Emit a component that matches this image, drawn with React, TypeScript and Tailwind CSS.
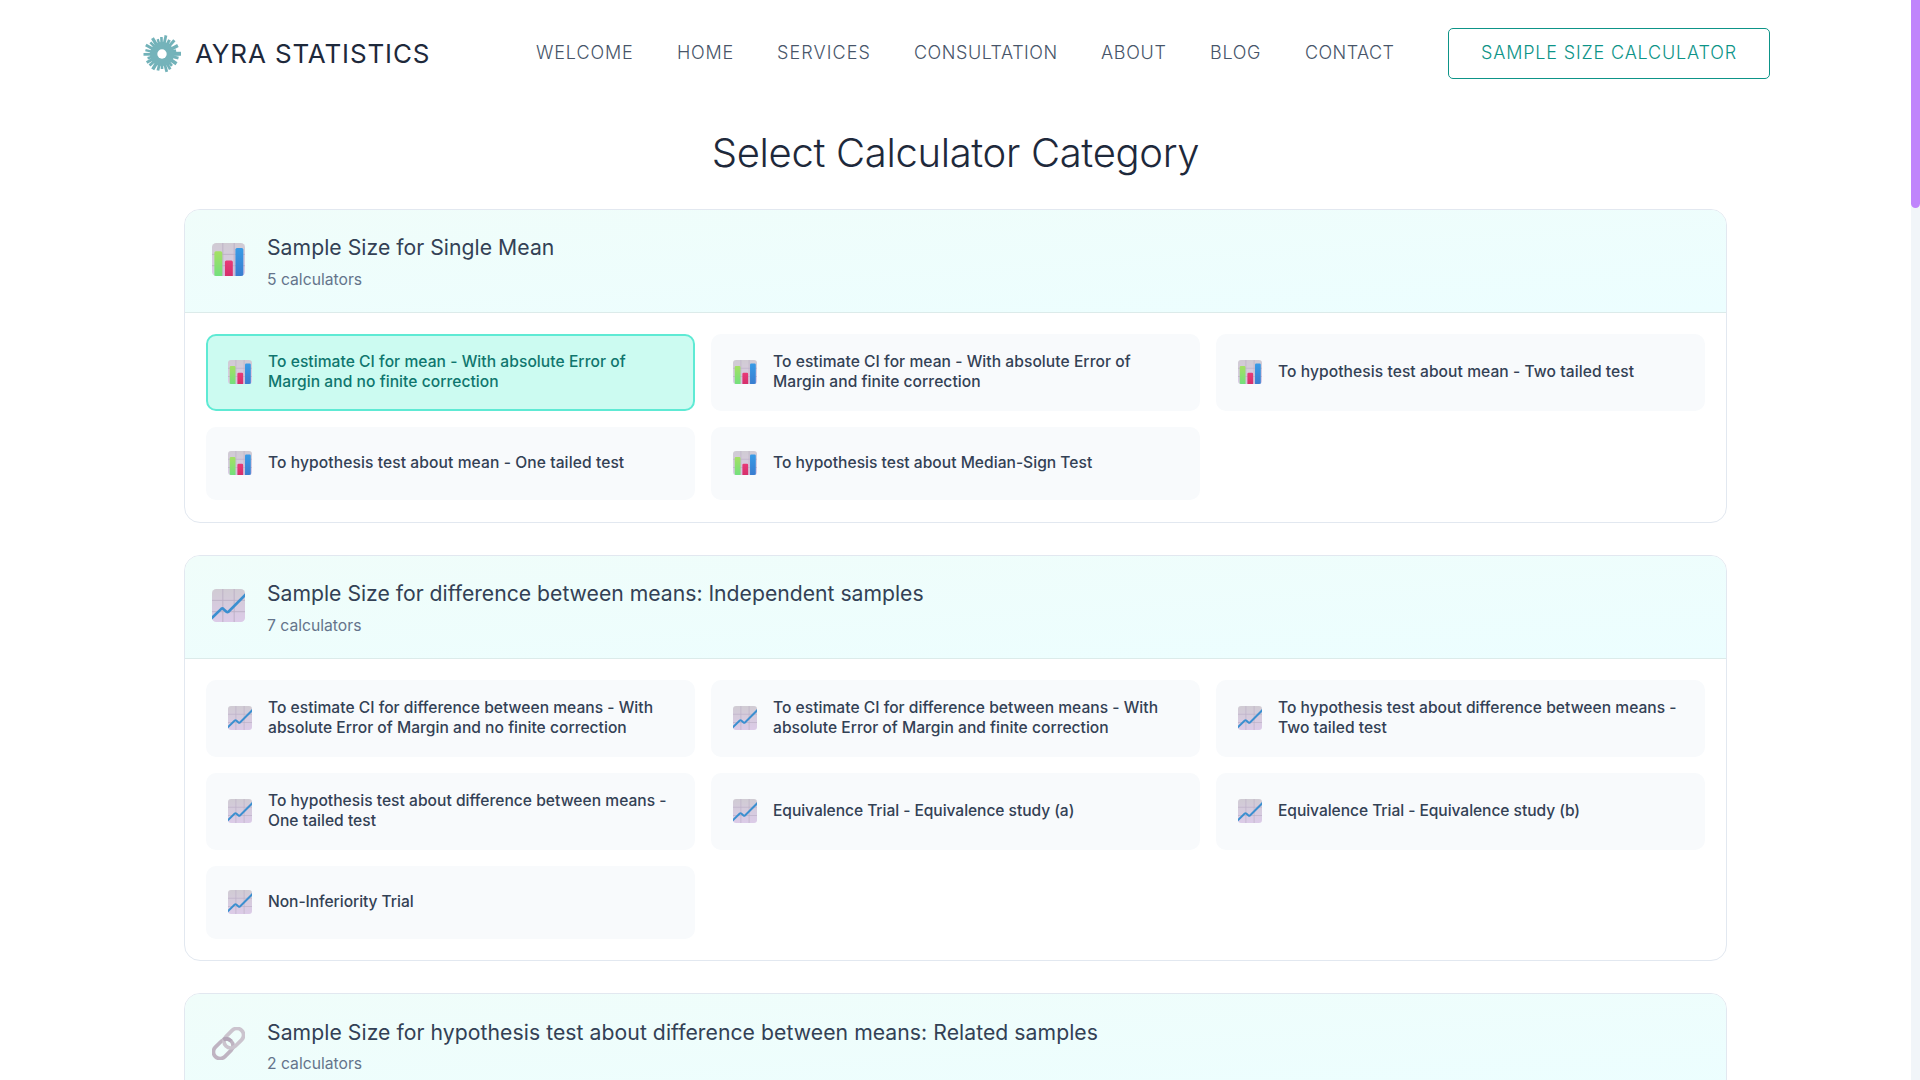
import React from "react";

type IconKind = "bars" | "line" | "link";
type Item = { lines: string[]; active?: boolean; tracking?: string };
type Category = { title: string; count: string; icon: IconKind; grid: string; heading: string; items: Item[] };

const categories: Category[] = [
  {
    title: "Sample Size for Single Mean",
    count: "5 calculators",
    icon: "bars",
    grid: "grid-rows-[77px_73px] pb-[22px]",
    heading: "leading-[31px] tracking-[0.03px]",
    items: [
      { lines: ["To estimate CI for mean - With absolute Error of", "Margin and no finite correction"], active: true },
      { lines: ["To estimate CI for mean - With absolute Error of", "Margin and finite correction"] },
      { lines: ["To hypothesis test about mean - Two tailed test"], tracking: "tracking-[0.07px]" },
      { lines: ["To hypothesis test about mean - One tailed test"], tracking: "tracking-[0.09px]" },
      { lines: ["To hypothesis test about Median-Sign Test"], tracking: "tracking-[0.01px]" },
    ],
  },
  {
    title: "Sample Size for difference between means: Independent samples",
    count: "7 calculators",
    icon: "line",
    grid: "grid-rows-[77px_77px_73px] pb-[21px]",
    heading: "leading-[31px] tracking-[-0.01px]",
    items: [
      { lines: ["To estimate CI for difference between means - With", "absolute Error of Margin and no finite correction"], tracking: "tracking-[0.02px]" },
      { lines: ["To estimate CI for difference between means - With", "absolute Error of Margin and finite correction"], tracking: "tracking-[0.02px]" },
      { lines: ["To hypothesis test about difference between means -", "Two tailed test"], tracking: "tracking-[0.02px]" },
      { lines: ["To hypothesis test about difference between means -", "One tailed test"], tracking: "tracking-[0.02px]" },
      { lines: ["Equivalence Trial - Equivalence study (a)"], tracking: "tracking-[-0.06px]" },
      { lines: ["Equivalence Trial - Equivalence study (b)"], tracking: "tracking-[-0.06px]" },
      { lines: ["Non-Inferiority Trial"], tracking: "tracking-[-0.06px]" },
    ],
  },
  {
    title: "Sample Size for hypothesis test about difference between means: Related samples",
    count: "2 calculators",
    icon: "link",
    grid: "grid-rows-[77px]",
    heading: "leading-[32px] tracking-[0.05px]",
    items: [],
  },
];

function Icon({ kind, className }: { kind: IconKind; className: string }) {
  if (kind === "link")
    return (
      <svg viewBox="0 0 32 32" className={className} fill="none">
        <g transform="rotate(-45 16 16)">
          <rect x="-2" y="9.500" width="21.500" height="13" rx="6.500" stroke="#bfb4c2" strokeWidth="3.600" />
          <rect x="12.500" y="9.500" width="21.500" height="13" rx="6.500" stroke="#cbc4ce" strokeWidth="3.600" />
          <path d="M15 9.700a6.500 6.500 0 0 1 4.500 6.300" stroke="#b3a6b8" strokeWidth="3.600" />
        </g>
      </svg>
    );
  return (
    <svg viewBox="0 0 32 32" className={className}>
      <defs>
        <linearGradient id="tile" x1="0" y1="0" x2="0" y2="1">
          <stop offset="0" stopColor="#d0cbd3" />
          <stop offset="1" stopColor="#dccbe8" />
        </linearGradient>
        <linearGradient id="green" x1="0" y1="0" x2="0" y2="1">
          <stop offset="0" stopColor="#a5e063" />
          <stop offset="1" stopColor="#73e07d" />
        </linearGradient>
        <linearGradient id="blue" x1="0" y1="0" x2="0" y2="1">
          <stop offset="0" stopColor="#389be6" />
          <stop offset="1" stopColor="#3a7dd0" />
        </linearGradient>
        <linearGradient id="red" x1="0" y1="0" x2="0" y2="1">
          <stop offset="0" stopColor="#e83a78" />
          <stop offset="1" stopColor="#d52f6b" />
        </linearGradient>
        <clipPath id="round">
          <rect width="32" height="32" rx="4" />
        </clipPath>
      </defs>
      <g clipPath="url(#round)">
        <rect width="32" height="32" fill="url(#tile)" />
        <path d="M10.500 0V32M21.500 0V32M0 11H32M0 22H32" stroke="#bcb0c6" strokeWidth="0.9" />
        {kind === "bars" ? (
          <>
            <path d="M2.300 32V9.500a1.500 1.500 0 0 1 1.500-1.500h4.700a1.500 1.500 0 0 1 1.500 1.500V32Z" fill="url(#green)" />
            <path d="M12.500 32V18.500a1.500 1.500 0 0 1 1.500-1.500h4.700a1.500 1.500 0 0 1 1.500 1.500V32Z" fill="url(#red)" />
            <path d="M22.700 32V6.300a1.500 1.500 0 0 1 1.500-1.500h4.700a1.500 1.500 0 0 1 1.500 1.500V32Z" fill="url(#blue)" />
          </>
        ) : (
          <path d="M-1 29L9 19.300Q10 18.500 11 19.300L14 22Q15 22.800 16 22L33 5" stroke="#3b8fd0" strokeWidth="2.600" fill="none" />
        )}
      </g>
    </svg>
  );
}

// Spokes of the emblem: angle in degrees, outer radius, width
const spokes: [number, number, number][] = [
  [-92, 17, 2.6], [-78, 19, 2.8], [-62, 16, 3], [-48, 18.5, 3], [-28, 18, 3.4], [-14, 14.5, 2.4],
  [-1, 19, 4], [14, 17, 3], [34, 17.5, 3.6], [50, 15.5, 2.6], [62, 17.5, 2.8], [75, 18.5, 2.8],
  [90, 15, 2.6], [104, 17, 2.8], [121, 18, 3.4], [137, 17, 2.8], [151, 17.5, 3], [164, 15, 2.6],
  [179, 18.5, 2.8], [193, 17, 2.4], [209, 18.5, 3], [225, 16.5, 2.6], [239, 18.5, 3.2], [254, 15.5, 2.4],
];

function Logo() {
  return (
    <svg viewBox="-20 -20 40 40" className="h-10 w-10 shrink-0">
      {spokes.map(([deg, r, w]) => {
        const a = (deg * Math.PI) / 180;
        return <line key={deg} x1={0} y1={0} x2={Math.cos(a) * r} y2={Math.sin(a) * r} stroke="#72b2b9" strokeWidth={w} />;
      })}
      <circle r="12" fill="#74b3ba" />
      <circle r="4.700" fill="#fff" />
    </svg>
  );
}

const nav = [
  { label: "WELCOME", cls: "w-[141px] tracking-[0.88px]" },
  { label: "HOME", cls: "w-[100px] tracking-[0.75px]" },
  { label: "SERVICES", cls: "w-[137px] tracking-[1.1px]" },
  { label: "CONSULTATION", cls: "w-[187px] tracking-[0.52px]" },
  { label: "ABOUT", cls: "w-[109px] tracking-[0.7px]" },
  { label: "BLOG", cls: "w-[95px] tracking-[0.7px]" },
  { label: "CONTACT", cls: "w-[143px] tracking-[0.4px]" },
];

export default function App() {
  return (
    <div className="flex h-[1080px] w-full overflow-hidden bg-white font-['Inter',sans-serif]">
      <div className="flex min-w-0 flex-1 flex-col">
        <header className="flex h-[107px] shrink-0 items-center pl-[142px]">
          <div className="flex w-[394px] items-center gap-[13px]">
            <Logo />
            <span className="whitespace-nowrap text-[26px] font-[430] tracking-[0.85px] text-[#1e293b]">AYRA STATISTICS</span>
          </div>
          <nav className="flex pb-[2px] text-[18px] font-light text-[#475569]">
            {nav.map((n) => (
              <a key={n.label} className={`${n.cls} whitespace-nowrap`}>{n.label}</a>
            ))}
          </nav>
          <a className="flex h-[51px] w-[322px] items-center justify-center whitespace-nowrap rounded-[5px] border border-[#0d9488] pb-[2px] text-[18px] font-light tracking-[0.83px] text-[#0d9488]">
            SAMPLE SIZE CALCULATOR
          </a>
        </header>
        <h1 className="h-[102px] shrink-0 pt-[20px] text-center text-[40px] font-light leading-[52px] tracking-[-0.33px] text-[#1e293b]">
          Select Calculator Category
        </h1>
        <main className="flex flex-col gap-[32px] px-[184px]">
          {categories.map((c) => (
            <section key={c.title} className="shrink-0 overflow-hidden rounded-[16px] border border-[#e2e8f0]">
              <div className="flex h-[103px] items-start gap-[22px] border-b border-[#dcebea] bg-gradient-to-br from-[#f0fdfa] to-[#ecfeff] pl-[27px]">
                <Icon kind={c.icon} className="mt-[33px] h-[33px] w-[33px]" />
                <div className="flex flex-col pt-[22px]">
                  <h2 className={`h-8 whitespace-nowrap text-[21.2px] text-[#334155] ${c.heading}`}>{c.title}</h2>
                  <p className="text-[15.7px] leading-[31px] text-[#64748b]">{c.count}</p>
                </div>
              </div>
              <div className={`grid grid-cols-3 gap-4 px-[21px] pt-[21px] ${c.grid}`}>
                {c.items.map((it, i) => (
                  <div
                    key={i}
                    className={`flex items-center gap-4 rounded-[10px] border-2 pb-[2px] pl-[20px] ${
                      it.active ? "border-[#5eead4] bg-[#ccfbf1] text-[#0f766e]" : "border-[#f8fafc] bg-[#f8fafc] text-[#334155]"
                    }`}
                  >
                    <Icon kind={c.icon} className="h-[24px] w-[24px]" />
                    <div className={`whitespace-nowrap text-[15.6px] font-[460] leading-[20px] ${it.tracking ?? "tracking-[0.05px]"}`}>
                      {it.lines.map((l) => (
                        <div key={l}>{l}</div>
                      ))}
                    </div>
                  </div>
                ))}
              </div>
            </section>
          ))}
        </main>
      </div>
      <div className="w-[9px] shrink-0 bg-[#f1f5f9]">
        <div className="h-[208px] rounded-b-[5px] bg-[#c084fc]" />
      </div>
    </div>
  );
}
